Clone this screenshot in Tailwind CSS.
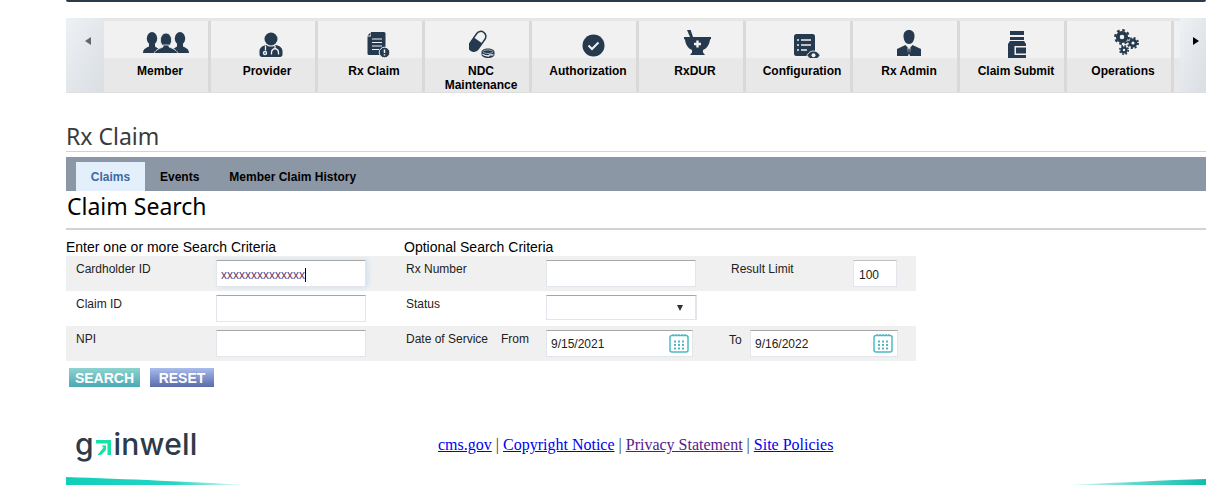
<!DOCTYPE html>
<html lang="en">
<head>
    <meta charset="UTF-8">
    <title>Rx Claim</title>
    <script src="https://cdn.jsdelivr.net/npm/@tailwindcss/browser@4"></script>
</head>
<body class="bg-white font-['Liberation_Sans',sans-serif] text-black">
<div class="flex flex-col w-[1228px] h-[485px] overflow-hidden">
    <div class="ml-[66px] w-[1140px] flex flex-col flex-1">
        <!-- top bar -->
        <div class="h-[2px] bg-[#2c3b49] rounded-b-[2px]"></div>

        <!-- main nav -->
        <nav class="mt-[16px] h-[75px] flex bg-[#e6e6e6] border-b border-[#dedede]">
            <div class="w-[38px] bg-gradient-to-br from-[#eef1f4] to-[#d9dee3] flex justify-center pt-[18px] pl-[6px]">
                <span class="mt-[1px] w-0 h-0 border-y-[4px] border-y-transparent border-r-[6px] border-r-[#666]"></span>
            </div>
            <div class="flex flex-1 pt-[3px] bg-[#e6e6e6]">
                <a class="w-[107px] flex flex-col border-r-[3px] border-[#d9d9d9]">
                    <div class="h-[37px] bg-[#f1f1f1] pl-[39px] pt-[11px]">
                        <svg width="46" height="21" viewBox="0 0 46 21" fill="#253a4e"><ellipse cx="9" cy="6.500" rx="5.200" ry="6.500"/><ellipse cx="37" cy="6.500" rx="5.200" ry="6.500"/><path d="M0 21c0-4 3-5 6-6.500V12h6v2.500l6 4V21z"/><path d="M46 21c0-4-3-5-6-6.500V12h-6v2.500l-6 4V21z"/><g stroke="#f1f1f1" stroke-width=".8"><ellipse cx="23" cy="8" rx="5.600" ry="7"/><path d="M11 21.500c1-3 4-4.500 9-6.500v-2h6v2c5 2 8 3.500 9 6.500z"/></g></svg>
                    </div>
                    <div class="flex-1 bg-[#e8e8e8] text-center text-[12px] leading-[14px] font-bold pt-[6px] pl-[8px]">Member</div>
                </a>
                <a class="w-[107px] flex flex-col border-r-[3px] border-[#d9d9d9]">
                    <div class="h-[37px] bg-[#f1f1f1] pl-[48px] pt-[11px]">
                        <svg width="24" height="26" viewBox="0 0 24 26"><circle cx="12" cy="7" r="6.500" fill="#253a4e"/><path d="M3 25h18c1.500 0 2.500-1 2.500-2.500V19c0-3-3-5.500-7-6-1 1-2.700 1.500-4.500 1.500S8.500 14 7.500 13c-4 .5-7 3-7 6v3.500C.5 24 1.500 25 3 25z" fill="#253a4e"/><circle cx="6" cy="21" r="2.200" fill="#f1f1f1"/><circle cx="6" cy="21" r="1" fill="#5a7fa8"/><path d="M6.500 13.500V18.500M16 13.500v3c-2 .5-3.500 2-3.500 4v2M16 16.500c2 .5 3.500 2 3.500 4v2" stroke="#f1f1f1" stroke-width="1.300" fill="none"/></svg>
                    </div>
                    <div class="flex-1 bg-[#e8e8e8] text-center text-[12px] leading-[14px] font-bold pt-[6px] pl-[8px]">Provider</div>
                </a>
                <a class="w-[107px] flex flex-col border-r-[3px] border-[#d9d9d9]">
                    <div class="h-[37px] bg-[#f1f1f1] pl-[49px] pt-[11px]">
                        <svg width="23" height="26" viewBox="0 0 23 26"><path d="M4 0h13a1.500 1.500 0 0 1 1.500 1.500V23H2a1.500 1.500 0 0 1-1.500-1.500V4.500L4 4.500z" fill="#253a4e"/><path d="M.5 3.500 3.500 .5v3z" fill="#253a4e"/><path d="M5 7h10M5 10.500h10M5 14h10M5 17.500h7" stroke="#f1f1f1" stroke-width="1.200"/><circle cx="17.500" cy="20.500" r="5.300" fill="#253a4e" stroke="#f1f1f1" stroke-width="1"/><path d="M17.500 17.500v3.500M17.500 22.200v1.300" stroke="#f1f1f1" stroke-width="1.500"/></svg>
                    </div>
                    <div class="flex-1 bg-[#e8e8e8] text-center text-[12px] leading-[14px] font-bold pt-[6px] pl-[8px]">Rx Claim</div>
                </a>
                <a class="w-[107px] flex flex-col border-r-[3px] border-[#d9d9d9]">
                    <div class="h-[37px] bg-[#f1f1f1] pl-[44px] pt-[9px]">
                        <svg width="26" height="28" viewBox="0 0 26 28"><g transform="rotate(35 8 11)"><rect x="3.500" y="0" width="10" height="22" rx="5" fill="#f1f1f1" stroke="#253a4e" stroke-width="1.500"/><path d="M3.500 10h10v7a5 5 0 0 1-10 0z" fill="#253a4e"/></g><path d="M12.500 22c0-2 3-3.500 6.500-3.500s6.500 1.500 6.500 3.500v2.500c0 2-3 3.500-6.500 3.500s-6.500-1.500-6.500-3.500z" fill="#253a4e"/><ellipse cx="19" cy="21.700" rx="5" ry="1.800" fill="#253a4e" stroke="#f1f1f1" stroke-width=".6"/><path d="M13.500 24.300c2 1.500 4 1.700 6 1.700l1-1.200h4" stroke="#f1f1f1" stroke-width="1.300" fill="none"/></svg>
                    </div>
                    <div class="flex-1 bg-[#e8e8e8] text-center text-[12px] leading-[14px] font-bold pt-[6px] pl-[8px]">NDC<br>Maintenance</div>
                </a>
                <a class="w-[107px] flex flex-col border-r-[3px] border-[#d9d9d9]">
                    <div class="h-[37px] bg-[#f1f1f1] pl-[50px] pt-[13px]">
                        <svg width="23" height="23" viewBox="0 0 23 23"><circle cx="11.500" cy="11.500" r="11" fill="#253a4e"/><path d="M6.500 11.500l3.500 3.500 6.500-6.500" fill="none" stroke="#f1f1f1" stroke-width="2"/></svg>
                    </div>
                    <div class="flex-1 bg-[#e8e8e8] text-center text-[12px] leading-[14px] font-bold pt-[6px] pl-[8px]">Authorization</div>
                </a>
                <a class="w-[107px] flex flex-col border-r-[3px] border-[#d9d9d9]">
                    <div class="h-[37px] bg-[#f1f1f1] pl-[45px] pt-[9px]">
                        <svg width="27" height="25" viewBox="0 0 27 25"><path d="M3 0l3.500-.5L9 7H6z" fill="#253a4e"/><path d="M0 7h27v2l-1 .5c-.5 5-3 9-7 10.500v2.500l2 2.500H6l2-2.500V20C4 18.500 1.500 14.500 1 9.500L0 9z" fill="#253a4e"/><path d="M13.500 10.500v7M10 14h7" stroke="#f1f1f1" stroke-width="2.400"/></svg>
                    </div>
                    <div class="flex-1 bg-[#e8e8e8] text-center text-[12px] leading-[14px] font-bold pt-[6px] pl-[8px]">RxDUR</div>
                </a>
                <a class="w-[107px] flex flex-col border-r-[3px] border-[#d9d9d9]">
                    <div class="h-[37px] bg-[#f1f1f1] pl-[48px] pt-[13px]">
                        <svg width="27" height="26" viewBox="0 0 27 26"><rect x="0" y="0" width="21" height="22" rx="2.500" fill="#253a4e"/><path d="M3 6h2M7 6h10M3 11h2M7 11h10M3 16h2M7 16h6" stroke="#f1f1f1" stroke-width="1.400"/><path d="M13 21.500c2-3.500 4-4.500 6.500-4.500s4.500 1 6.500 4.500c-2 3-4 4-6.500 4s-4.500-1-6.500-4z" fill="#253a4e" stroke="#f1f1f1" stroke-width="1"/><circle cx="19.500" cy="21.300" r="2" fill="#f1f1f1"/></svg>
                    </div>
                    <div class="flex-1 bg-[#e8e8e8] text-center text-[12px] leading-[14px] font-bold pt-[6px] pl-[8px]">Configuration</div>
                </a>
                <a class="w-[107px] flex flex-col border-r-[3px] border-[#d9d9d9]">
                    <div class="h-[37px] bg-[#f1f1f1] pl-[44px] pt-[9px]">
                        <svg width="24" height="27" viewBox="0 0 24 27"><path d="M12 0c3.500 0 5.500 2.500 5.500 6 0 3.500-1.500 8-5.500 8S6.500 9.500 6.500 6c0-3.500 2-6 5.500-6z" fill="#253a4e"/><path d="M8.500 15 0 19v7h24v-7l-8.500-4-3.500 4z" fill="#253a4e"/><path d="M10.500 17.500 12 19l1.500-1.500L12.800 26h-1.600z" fill="#f1f1f1"/><path d="M11.300 19h1.400l.3 5-1 1-1-1z" fill="#253a4e"/></svg>
                    </div>
                    <div class="flex-1 bg-[#e8e8e8] text-center text-[12px] leading-[14px] font-bold pt-[6px] pl-[8px]">Rx Admin</div>
                </a>
                <a class="w-[107px] flex flex-col border-r-[3px] border-[#d9d9d9]">
                    <div class="h-[37px] bg-[#f1f1f1] pl-[48px] pt-[10px]">
                        <svg width="18" height="28" viewBox="0 0 18 28"><rect x="2" y="0" width="14" height="4" fill="#253a4e"/><rect x="2" y="6" width="14" height="3" fill="#253a4e"/><path d="M2 10h14l2 3v15H0V13z" fill="#253a4e"/><path d="M6.500 15H18v9H6.500z" fill="#f1f1f1"/><path d="M8 16.500h10v6H8z" fill="#253a4e"/></svg>
                    </div>
                    <div class="flex-1 bg-[#e8e8e8] text-center text-[12px] leading-[14px] font-bold pt-[6px] pl-[8px]">Claim Submit</div>
                </a>
                <a class="w-[107px] flex flex-col border-r-[3px] border-[#d9d9d9]">
                    <div class="h-[37px] bg-[#f1f1f1] pl-[47px] pt-[8px]">
                        <svg width="25" height="26" viewBox="0 0 25 26" fill="none" stroke="#253a4e"><circle cx="8" cy="8" r="4.200" stroke-width="3.800"/><circle cx="8" cy="8" r="6.800" stroke-width="2.200" stroke-dasharray="2.700 2.640"/><circle cx="19" cy="14" r="3" stroke-width="2.800"/><circle cx="19" cy="14" r="5" stroke-width="2" stroke-dasharray="2 1.930"/><circle cx="10" cy="21" r="2.400" stroke-width="2.400"/><circle cx="10" cy="21" r="4.200" stroke-width="1.700" stroke-dasharray="1.700 1.600"/></svg>
                    </div>
                    <div class="flex-1 bg-[#e8e8e8] text-center text-[12px] leading-[14px] font-bold pt-[6px] pl-[8px]">Operations</div>
                </a>
                <div class="w-[6px] flex flex-col">
                    <div class="h-[37px] bg-[#f1f1f1]"></div>
                    <div class="flex-1 bg-[#e8e8e8]"></div>
                </div>
            </div>
            <div class="w-[26px] bg-gradient-to-br from-[#eef1f4] to-[#d9dee3] flex justify-center pt-[18px] pl-[5px]">
                <span class="mt-[1px] w-0 h-0 border-y-[4px] border-y-transparent border-l-[6px] border-l-black"></span>
            </div>
        </nav>

        <!-- page title -->
        <h1 class="mt-[28px] h-[31px] text-[23px] leading-[30px] text-[#3a3a3a] border-b border-[#d4d4d4] font-['Noto_Sans',sans-serif]">Rx Claim</h1>

        <!-- tabs -->
        <div class="mt-[5px] h-[34px] bg-[#8c97a5] flex items-end pl-[10px] text-[12px] font-bold">
            <a class="w-[69px] h-[29px] bg-[#e3f0fb] text-[#3e68a3] flex items-center justify-center">Claims</a>
            <a class="ml-[15px] h-[29px] flex items-center">Events</a>
            <a class="ml-[30px] h-[29px] flex items-center">Member Claim History</a>
        </div>

        <h2 class="pl-px h-[39px] text-[23px] leading-[31px] border-b-2 border-[#d2d2d2] font-['Noto_Sans',sans-serif]">Claim Search</h2>

        <!-- search form -->
        <div class="w-[850px] mt-[9px] text-[12px] leading-[14px] text-[#222]">
            <div class="flex h-[17px] text-[14px] leading-[17px] text-black">
                <div class="w-[338px]">Enter one or more Search Criteria</div>
                <div>Optional Search Criteria</div>
            </div>
            <div class="flex h-[35px] bg-[#f0f0f0]">
                <div class="w-[150px] pl-[10px] pt-[6px]">Cardholder ID</div>
                <div class="w-[190px] pt-[4px]">
                    <div class="flex items-center w-[150px] h-[27px] bg-white border border-[#e2e6ec] border-t-[#a6a6a6] shadow-[2px_0_5px_#cfe0f0] pl-[4px] pt-[2px] text-[#6b3a6b]">xxxxxxxxxxxxxx<span class="w-px h-[14px] bg-black"></span></div>
                </div>
                <div class="w-[140px] pt-[6px]">Rx Number</div>
                <div class="w-[185px] pt-[4px]">
                    <input class="block w-[150px] h-[27px] bg-white border border-[#e2e6ec] border-t-[#a6a6a6]">
                </div>
                <div class="w-[122px] pt-[6px]">Result Limit</div>
                <div class="pt-[4px]">
                    <div class="flex items-center w-[44px] h-[27px] bg-white border border-[#e2e6ec] border-t-[#c0c0c0] pl-[5px] pt-[2px]">100</div>
                </div>
            </div>
            <div class="flex h-[35px]">
                <div class="w-[150px] pl-[10px] pt-[6px]">Claim ID</div>
                <div class="w-[190px] pt-[4px]">
                    <input class="block w-[150px] h-[27px] bg-white border border-[#e2e6ec] border-t-[#a6a6a6]">
                </div>
                <div class="w-[140px] pt-[6px]">Status</div>
                <div class="pt-[4px]">
                    <div class="flex items-center justify-end w-[151px] h-[25px] bg-white border border-[#e2e6ec] border-t-[#a6a6a6] border-r-2 pr-[12px]">
                        <span class="w-0 h-0 border-x-[3.5px] border-x-transparent border-t-[6px] border-t-[#333]"></span>
                    </div>
                </div>
            </div>
            <div class="flex h-[35px] bg-[#f0f0f0]">
                <div class="w-[150px] pl-[10px] pt-[6px]">NPI</div>
                <div class="w-[190px] pt-[4px]">
                    <input class="block w-[150px] h-[27px] bg-white border border-[#e2e6ec] border-t-[#a6a6a6]">
                </div>
                <div class="w-[95px] pt-[6px]">Date of Service</div>
                <div class="w-[45px] pt-[6px]">From</div>
                <div class="w-[183px] pt-[4px]">
                    <div class="flex items-center justify-between w-[147px] h-[27px] bg-white border border-[#e2e6ec] border-t-[#a6a6a6] pl-[4px] pr-[3px] pt-[1px]">
                        <span>9/15/2021</span>
                        <svg class="-mt-[2px]" width="20" height="20" viewBox="0 0 20 20" fill="none"><rect x="1" y="2.500" width="18" height="16.500" rx="2" stroke="#4fb9c3" stroke-width="1.500"/><path d="M4 1v2M7 1v2M10 1v2M13 1v2M16 1v2" stroke="#4fb9c3" stroke-width="1.300"/><path d="M5 7.500h2v2H5zM9 7.500h2v2H9zM13 7.500h2v2h-2zM5 11h2v2H5zM9 11h2v2H9zM13 11h2v2h-2zM5 14.500h2v2H5zM9 14.500h2v2H9zM13 14.500h2v2h-2z" fill="#4fb9c3"/></svg>
                    </div>
                </div>
                <div class="w-[21px] pt-[7px]">To</div>
                <div class="pt-[4px]">
                    <div class="flex items-center justify-between w-[148px] h-[27px] bg-white border border-[#e2e6ec] border-t-[#a6a6a6] pl-[4px] pr-[4px] pt-[1px]">
                        <span>9/16/2022</span>
                        <svg class="-mt-[2px]" width="20" height="20" viewBox="0 0 20 20" fill="none"><rect x="1" y="2.500" width="18" height="16.500" rx="2" stroke="#4fb9c3" stroke-width="1.500"/><path d="M4 1v2M7 1v2M10 1v2M13 1v2M16 1v2" stroke="#4fb9c3" stroke-width="1.300"/><path d="M5 7.500h2v2H5zM9 7.500h2v2H9zM13 7.500h2v2h-2zM5 11h2v2H5zM9 11h2v2H9zM13 11h2v2h-2zM5 14.500h2v2H5zM9 14.500h2v2H9zM13 14.500h2v2h-2z" fill="#4fb9c3"/></svg>
                    </div>
                </div>
            </div>
            <div class="flex gap-[10px] mt-[7px] pl-[3px]">
                <button class="w-[71px] h-[19px] pt-[1px] bg-gradient-to-b from-[#8ed3cf] to-[#4aa9b4] text-white text-[14px] leading-[18px] font-bold">SEARCH</button>
                <button class="w-[64px] h-[19px] pt-[1px] bg-gradient-to-b from-[#a9bdee] to-[#5a6ba8] text-white text-[14px] leading-[18px] font-bold">RESET</button>
            </div>
        </div>

        <!-- footer -->
        <div class="mt-[36px] flex items-center h-[44px]">
            <div class="ml-[10px] w-[121px] shrink-0 flex items-center text-[#2c3b49] font-['Inter',sans-serif] font-medium text-[30px] leading-[36px]">
                <span class="-mt-[2px] -ml-px">g</span>
                <svg class="shrink-0 ml-[2px] mr-[3px] mt-[5px]" width="15" height="15" viewBox="0 0 15 15"><path d="M0 0h15v15h-3.500V3.500H0z" fill="#14e3a8"/><path d="M1.500 15h3.500l5-5V5.500h-4.500l2 2z" fill="#14e3a8"/></svg>
                <span class="-mt-[2px] tracking-[0.2px]">inwell</span>
            </div>
            <div class="ml-[241px] text-[16px] leading-[20px] font-['Liberation_Serif',serif] text-[#333]">
                <a class="underline text-[#0000ee]">cms.gov</a> | <a class="underline text-[#0000ee]">Copyright Notice</a> | <a class="underline text-[#551a8b]">Privacy Statement</a> | <a class="underline text-[#0000ee]">Site Policies</a>
            </div>
        </div>

        <!-- footer swoosh -->
        <div class="mt-auto flex justify-between items-end h-[8px]">
            <svg width="180" height="8" viewBox="0 0 180 8" preserveAspectRatio="none"><defs><linearGradient id="swooshL"><stop offset="0" stop-color="#12cdbb"/><stop offset=".6" stop-color="#25d6c4"/><stop offset="1" stop-color="#e9fbf8"/></linearGradient></defs><path d="M0 0C60 2 130 5 180 8H0z" fill="url(#swooshL)"/></svg>
            <svg width="140" height="6" viewBox="0 0 140 6" preserveAspectRatio="none"><defs><linearGradient id="swooshR"><stop offset="0" stop-color="#e9fbf8"/><stop offset=".5" stop-color="#5ed8ca"/><stop offset="1" stop-color="#12bcae"/></linearGradient></defs><path d="M0 6C50 4 100 1 140 0v6z" fill="url(#swooshR)"/></svg>
        </div>
    </div>
</div>
</body>
</html>
